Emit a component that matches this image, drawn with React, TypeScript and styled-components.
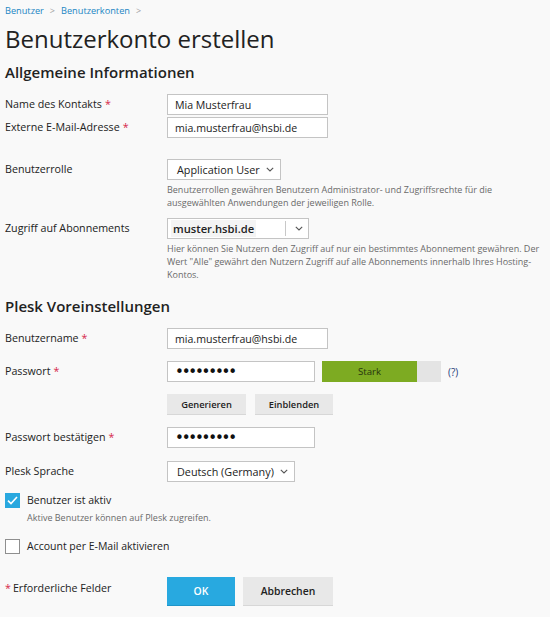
import React from "react";
import styled, { createGlobalStyle } from "styled-components";

const GlobalStyle = createGlobalStyle`
  html, body {
    margin: 0;
    padding: 0;
    background: #f9f9f9;
  }
  body {
    font-family: "Open Sans", "Noto Sans", sans-serif;
    color: #222222;
    font-size: 10.7px;
  }
`;

const Page = styled.div`
  padding: 2px 5px 10px 5px;
`;

const Crumbs = styled.div`
  display: flex;
  align-items: center;
  gap: 6px;
  font-size: 9.2px;
  height: 16px;

  & a {
    color: #1b86c4;
    text-decoration: none;
  }

  & span {
    color: #a0a0a0;
    font-size: 9px;
  }
`;

const Title = styled.h1`
  font-size: 24px;
  font-weight: 400;
  margin: 4px 0 0 0;
  line-height: 34px;
  color: #222222;
`;

const Section = styled.h2<{ $top?: number }>`
  font-size: 15px;
  font-weight: 600;
  margin: ${({ $top }) => $top ?? 0}px 0 10px 0;
  line-height: 24px;
  color: #222222;
`;

const Row = styled.div<{ $mt?: number }>`
  display: grid;
  grid-template-columns: 162px 1fr;
  align-items: start;
  margin-top: ${({ $mt }) => $mt ?? 0}px;
`;

const Label = styled.label`
  font-size: 10.7px;
  line-height: 21px;
  color: #222222;
  white-space: nowrap;
`;

const Req = styled.span`
  color: #d6274a;
  margin-left: 3px;
`;

const Field = styled.div`
  display: flex;
  flex-direction: column;
`;

const Inline = styled.div<{ $gap?: number }>`
  display: flex;
  align-items: center;
  gap: ${({ $gap }) => $gap ?? 7}px;
`;

const TextInput = styled.input<{ $w: number }>`
  box-sizing: border-box;
  width: ${({ $w }) => $w}px;
  height: 21px;
  border: 1px solid #c4c4c4;
  background: #ffffff;
  padding: 0 7px;
  font-family: "Open Sans", sans-serif;
  font-size: 10.6px;
  color: #222222;
  outline: none;

  &[type="password"] {
    font-family: "DejaVu Sans", sans-serif;
    font-size: 15px;
    letter-spacing: -2.2px;
    color: #111111;
  }
`;

const Select = styled.div<{ $w: number }>`
  box-sizing: border-box;
  width: ${({ $w }) => $w}px;
  height: 21px;
  border: 1px solid #c4c4c4;
  background: #ffffff;
  display: flex;
  align-items: center;
  padding: 0 6px 0 9px;
  font-size: 10.8px;
  color: #222222;
  white-space: nowrap;

  & .value {
    flex: 1;
  }
`;

const Combo = styled.div<{ $w: number }>`
  box-sizing: border-box;
  width: ${({ $w }) => $w}px;
  height: 21px;
  border: 1px solid #c4c4c4;
  background: #ffffff;
  display: flex;
  align-items: center;
  padding: 0 5px 0 3px;
  white-space: nowrap;

  & .value {
    flex: 1;
    display: flex;
  }

  & .value b {
    font-weight: 600;
    font-size: 11.2px;
    background: #f4f4f4;
    padding: 1px 2px 1px 2px;
  }

  & .divider {
    width: 1px;
    height: 15px;
    background: #c8c8c8;
    margin-right: 9px;
  }
`;

const Help = styled.p`
  margin: 3px 0 0 0;
  font-size: 9px;
  line-height: 13px;
  color: #6a6a6a;
  max-width: 385px;
`;

const Meter = styled.div`
  width: 119px;
  height: 21px;
  background: #e4e4e4;
  display: flex;
`;

const MeterFill = styled.div`
  height: 100%;
  background: #7dab22;
  color: #26330e;
  font-size: 9.6px;
  display: flex;
  align-items: center;
  justify-content: center;
`;

const HelpLink = styled.span`
  color: #233c7a;
  font-size: 10px;
`;

const Button = styled.button<{ $w: number; $h?: number; $primary?: boolean }>`
  width: ${({ $w }) => $w}px;
  height: ${({ $h }) => $h ?? 21}px;
  border: none;
  border-bottom: 1px solid ${({ $primary }) => ($primary ? "#1f95c9" : "#d7d7d7")};
  background: ${({ $primary }) => ($primary ? "#28a9e0" : "#e8e8e8")};
  color: ${({ $primary }) => ($primary ? "#ffffff" : "#222222")};
  font-family: "Open Sans", sans-serif;
  font-size: ${({ $h }) => ($h ? 10.4 : 9.3)}px;
  font-weight: 600;
  padding: 0;
  cursor: pointer;
`;

const CheckRow = styled.div<{ $mt: number }>`
  display: flex;
  align-items: flex-start;
  gap: 7px;
  margin-top: ${({ $mt }) => $mt}px;
`;

const Box = styled.span<{ $on?: boolean }>`
  box-sizing: border-box;
  width: 15px;
  height: 15px;
  flex: none;
  background: ${({ $on }) => ($on ? "#29a8df" : "#ffffff")};
  border: 1px solid ${({ $on }) => ($on ? "#29a8df" : "#8f8f8f")};
  display: flex;
  align-items: center;
  justify-content: center;
`;

const CheckText = styled.div`
  display: flex;
  flex-direction: column;
  font-size: 10.5px;
  line-height: 15px;

  & p {
    margin: 3px 0 0 0;
    font-size: 9px;
    line-height: 13px;
    color: #6a6a6a;
  }
`;

const Footer = styled.div`
  display: grid;
  grid-template-columns: 162px 1fr;
  margin-top: 23px;
`;

const Note = styled.div`
  font-size: 10.7px;
  line-height: 20px;
  margin-top: 1px;

  & span {
    color: #d6274a;
    margin-right: 2px;
  }
`;

const Chevron = () => (
  <svg width="8" height="5" viewBox="0 0 8 5">
    <path d="M0.8 0.8 L4 4 L7.2 0.8" fill="none" stroke="#555" strokeWidth="1.1" />
  </svg>
);

export default function App() {
  return (
    <Page>
      <GlobalStyle />
      <Crumbs>
        <a href="#">Benutzer</a>
        <span>&gt;</span>
        <a href="#">Benutzerkonten</a>
        <span>&gt;</span>
      </Crumbs>
      <Title>Benutzerkonto erstellen</Title>
      <Section $top={4}>Allgemeine Informationen</Section>

      <Row $mt={3}>
        <Label>
          Name des Kontakts<Req>*</Req>
        </Label>
        <TextInput $w={161} defaultValue="Mia Musterfrau" />
      </Row>
      <Row $mt={2}>
        <Label>
          Externe E-Mail-Adresse<Req>*</Req>
        </Label>
        <TextInput $w={161} defaultValue="mia.musterfrau@hsbi.de" />
      </Row>

      <Row $mt={21}>
        <Label>Benutzerrolle</Label>
        <Field>
          <Select $w={114}>
            <span className="value">Application User</span>
            <Chevron />
          </Select>
          <Help>
            Benutzerrollen gewähren Benutzern Administrator- und Zugriffsrechte für die
            ausgewählten Anwendungen der jeweiligen Rolle.
          </Help>
        </Field>
      </Row>

      <Row $mt={9}>
        <Label>Zugriff auf Abonnements</Label>
        <Field>
          <Combo $w={142}>
            <span className="value">
              <b>muster.hsbi.de</b>
            </span>
            <span className="divider" />
            <Chevron />
          </Combo>
          <Help>
            Hier können Sie Nutzern den Zugriff auf nur ein bestimmtes Abonnement gewähren. Der
            Wert "Alle" gewährt den Nutzern Zugriff auf alle Abonnements innerhalb Ihres Hosting-
            Kontos.
          </Help>
        </Field>
      </Row>

      <Section $top={13}>Plesk Voreinstellungen</Section>

      <Row $mt={1}>
        <Label>
          Benutzername<Req>*</Req>
        </Label>
        <TextInput $w={161} defaultValue="mia.musterfrau@hsbi.de" />
      </Row>

      <Row $mt={12}>
        <Label>
          Passwort<Req>*</Req>
        </Label>
        <Field>
          <Inline>
            <TextInput $w={148} type="password" defaultValue="abcdefghi" />
            <Inline $gap={7}>
              <Meter>
                <MeterFill style={{ width: "80%" }}>Stark</MeterFill>
              </Meter>
              <HelpLink>(?)</HelpLink>
            </Inline>
          </Inline>
          <Inline $gap={9} style={{ marginTop: 12 }}>
            <Button $w={79}>Generieren</Button>
            <Button $w={78}>Einblenden</Button>
          </Inline>
        </Field>
      </Row>

      <Row $mt={12}>
        <Label>
          Passwort bestätigen<Req>*</Req>
        </Label>
        <TextInput $w={148} type="password" defaultValue="abcdefghi" />
      </Row>

      <Row $mt={13}>
        <Label>Plesk Sprache</Label>
        <Select $w={128}>
          <span className="value">Deutsch (Germany)</span>
          <Chevron />
        </Select>
      </Row>

      <CheckRow $mt={11}>
        <Box $on>
          <svg width="11" height="9" viewBox="0 0 11 9">
            <path d="M1 4.6 L4 7.6 L10 1" fill="none" stroke="#ffffff" strokeWidth="1.6" />
          </svg>
        </Box>
        <CheckText>
          <span>Benutzer ist aktiv</span>
          <p>Aktive Benutzer können auf Plesk zugreifen.</p>
        </CheckText>
      </CheckRow>

      <CheckRow $mt={15}>
        <Box />
        <CheckText>
          <span>Account per E-Mail aktivieren</span>
        </CheckText>
      </CheckRow>

      <Footer>
        <Note>
          <span>*</span>Erforderliche Felder
        </Note>
        <Inline $gap={8}>
          <Button $primary $w={68} $h={29}>
            OK
          </Button>
          <Button $w={90} $h={29}>
            Abbrechen
          </Button>
        </Inline>
      </Footer>
    </Page>
  );
}
